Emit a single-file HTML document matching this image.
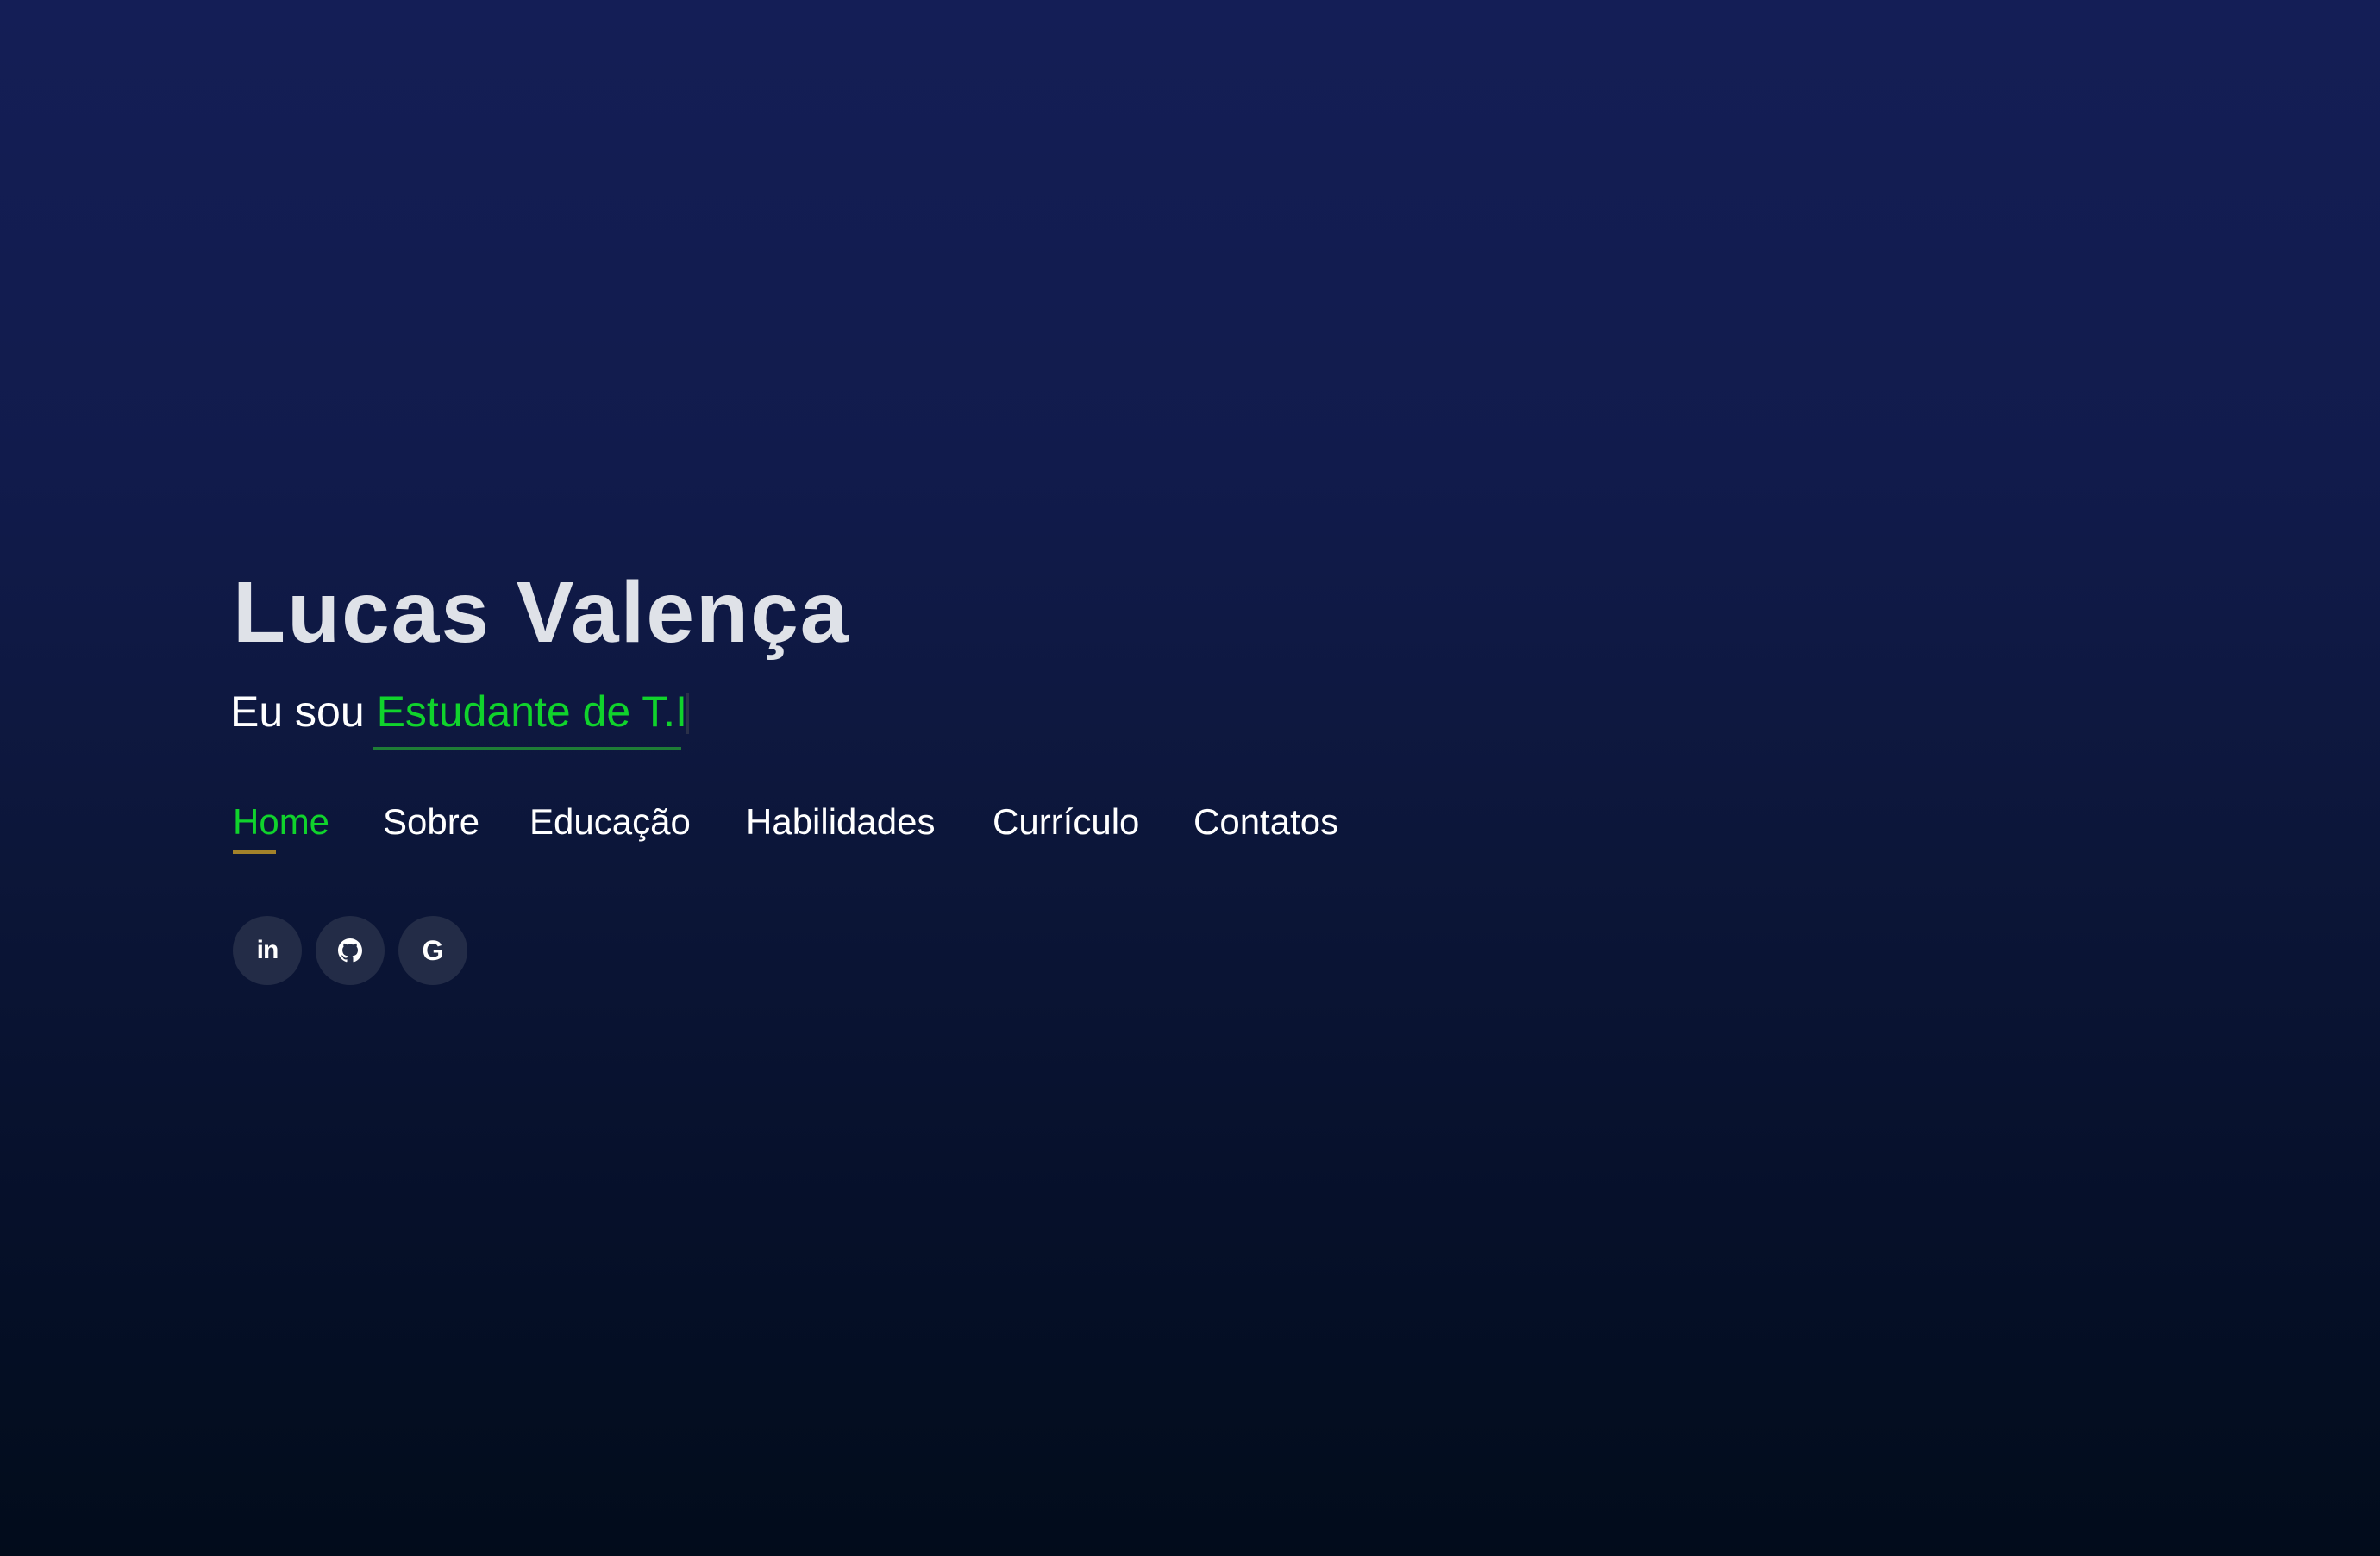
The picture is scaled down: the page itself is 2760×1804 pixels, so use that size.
<!DOCTYPE html>
<html><head><meta charset="utf-8"><style>
html,body{margin:0;padding:0}
body{width:2760px;height:1804px;overflow:hidden;background:linear-gradient(180deg,#141e56 0%,#111b4c 30%,#0c1639 55%,#06102a 78%,#020c1b 100%);font-family:"Liberation Sans",sans-serif;position:relative}
.a{position:absolute;white-space:nowrap}
.name{left:270px;top:645px;font-size:100px;font-weight:bold;color:#dfe2e8;letter-spacing:2px;line-height:130px}
.sub{left:267px;top:795px;font-size:50px;color:#fff;line-height:60px}
.sub span{color:#10d32c}
.ul{left:433px;top:866px;width:357px;height:4px;background:#1e7d36}
.cur{left:796px;top:803px;width:3px;height:48px;background:#2a3048}
.nav{top:928px;font-size:42px;color:#fff;line-height:50px}
.hl{left:270px;top:986px;width:50px;height:4px;background:#a3822a}
.c{top:1062px;width:80px;height:80px;border-radius:50%;background:#232c47;display:flex;align-items:center;justify-content:center;color:#fff;font-weight:bold}
</style></head><body>
<div class="a name">Lucas Valença</div>
<div class="a sub">Eu sou <span>Estudante de T.I</span></div>
<div class="a ul"></div>
<div class="a cur"></div>
<div class="a nav" style="left:270px;color:#10d32c">Home</div>
<div class="a nav" style="left:444px">Sobre</div>
<div class="a nav" style="left:614px">Educação</div>
<div class="a nav" style="left:865px">Habilidades</div>
<div class="a nav" style="left:1151px">Currículo</div>
<div class="a nav" style="left:1384px">Contatos</div>
<div class="a hl"></div>
<div class="a c" style="left:270px;font-size:30px;letter-spacing:-1px">in</div>
<div class="a c" style="left:366px"><svg width="28" height="28" viewBox="0 0 16 16"><path fill="#fff" d="M8 0C3.58 0 0 3.58 0 8c0 3.54 2.29 6.53 5.470 7.59.4.07.55-.17.55-.38v-1.33c-2.23.48-2.7-1.07-2.7-1.07-.36-.93-.89-1.17-.89-1.17-.73-.5.06-.49.06-.49.8.06 1.23.83 1.23.83.71 1.22 1.87.87 2.33.66.07-.52.28-.87.51-1.07-1.78-.2-3.64-.89-3.64-3.95 0-.87.31-1.59.82-2.15-.08-.2-.36-1.02.08-2.12 0 0 .67-.21 2.2.82a7.6 7.6 0 0 1 4 0c1.53-1.04 2.2-.82 2.2-.82.44 1.1.16 1.92.08 2.12.51.56.82 1.27.82 2.15 0 3.07-1.87 3.75-3.65 3.95.29.25.54.73.54 1.48v2.2c0 .21.15.46.55.38A8 8 0 0 0 16 8c0-4.42-3.58-8-8-8z"/></svg></div>
<div class="a c" style="left:462px;font-size:32px">G</div>
</body></html>
